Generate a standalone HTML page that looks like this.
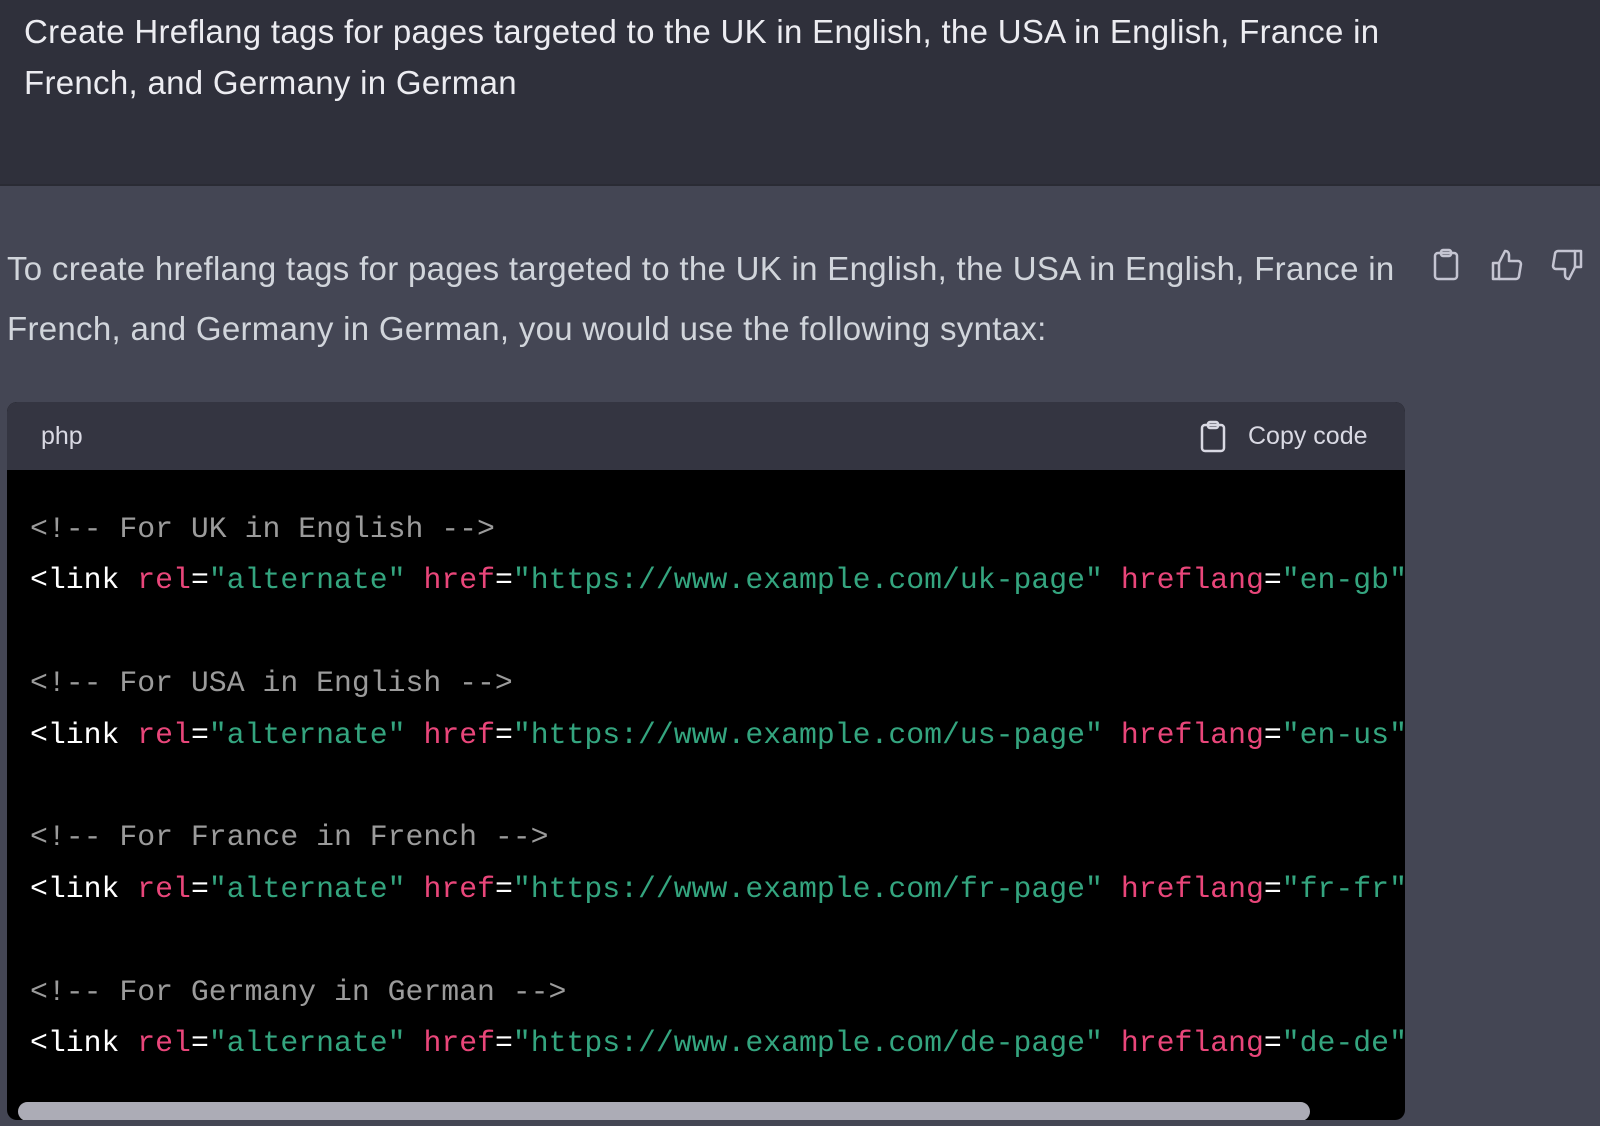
<!DOCTYPE html>
<html><head><meta charset="utf-8"><style>
*{margin:0;padding:0;box-sizing:border-box}
body{width:1600px;height:1126px;overflow:hidden;background:#444654;font-family:"Liberation Sans",sans-serif;position:relative}
.top{position:absolute;left:0;top:0;width:1600px;height:186px;background:#2f303b;border-bottom:2px solid #2a2b34}
.t{position:absolute;color:#ececf1;font-size:33px;white-space:nowrap;letter-spacing:0.3px}
.code{position:absolute;left:7px;top:402px;width:1398px;height:718px;background:#000;border-radius:10px;overflow:hidden}
.hdr{height:68px;background:#343541;position:relative}
.pre{position:absolute;left:23px;top:102px;font-family:"Liberation Mono",monospace;font-size:29.8px;line-height:51.4px;white-space:pre;color:#fff}
.c{color:#9b9b9b}.a{color:#e9467a}.s{color:#34a57f}
.sb{position:absolute;left:11px;top:700px;width:1292px;height:19px;border-radius:10px;background:#acacb6}
</style></head><body>
<div class="top"></div>
<div class="t" style="left:24px;top:13px">Create Hreflang tags for pages targeted to the UK in English, the USA in English, France in</div>
<div class="t" style="left:24px;top:64px">French, and Germany in German</div>
<div class="t" style="left:7px;top:250px;color:#d1d5db">To create hreflang tags for pages targeted to the UK in English, the USA in English, France in</div>
<div class="t" style="left:7px;top:310px;color:#d1d5db">French, and Germany in German, you would use the following syntax:</div>
<svg style="position:absolute;left:1432px;top:248px" width="30" height="34" viewBox="0 0 30 34" fill="none" stroke="#c5c5d2" stroke-width="2.5" stroke-linejoin="round"><rect x="3" y="5" width="22" height="26" rx="3"/><rect x="9" y="2" width="10" height="6" rx="2"/></svg>
<svg style="position:absolute;left:1490px;top:248px" width="36" height="34" viewBox="0 0 36 34" fill="none" stroke="#c5c5d2" stroke-width="2.5" stroke-linejoin="round"><path d="M3 15h6v16H3z"/><path d="M9 15l6-12c3 0 4 2 4 4v6h9c2 0 3 2 3 3l-2 12c0 2-2 3-3 3H9"/></svg>
<svg style="position:absolute;left:1550px;top:248px" width="36" height="34" viewBox="0 0 36 34" fill="none" stroke="#c5c5d2" stroke-width="2.5" stroke-linejoin="round"><path d="M25 3h6v16h-6z"/><path d="M25 19l-6 12c-3 0-4-2-4-4v-6H6c-2 0-3-2-3-3l2-12c0-2 2-3 3-3h17"/></svg>
<div class="code">
<div class="hdr">
<div style="position:absolute;left:34px;top:20px;color:#d9d9e3;font-size:25px">php</div>
<svg style="position:absolute;left:1192px;top:18px" width="30" height="34" viewBox="0 0 30 34" fill="none" stroke="#d9d9e3" stroke-width="2.5" stroke-linejoin="round"><rect x="3" y="5" width="22" height="26" rx="3"/><rect x="9" y="2" width="10" height="6" rx="2"/></svg>
<div style="position:absolute;left:1241px;top:20px;color:#d9d9e3;font-size:25px">Copy code</div>
</div>
<div class="pre"><span class="c">&lt;!-- For UK in English --&gt;</span>
&lt;link <span class="a">rel</span>=<span class="s">"alternate"</span> <span class="a">href</span>=<span class="s">"https://www.example.com/uk-page"</span> <span class="a">hreflang</span>=<span class="s">"en-gb"</span> /&gt;

<span class="c">&lt;!-- For USA in English --&gt;</span>
&lt;link <span class="a">rel</span>=<span class="s">"alternate"</span> <span class="a">href</span>=<span class="s">"https://www.example.com/us-page"</span> <span class="a">hreflang</span>=<span class="s">"en-us"</span> /&gt;

<span class="c">&lt;!-- For France in French --&gt;</span>
&lt;link <span class="a">rel</span>=<span class="s">"alternate"</span> <span class="a">href</span>=<span class="s">"https://www.example.com/fr-page"</span> <span class="a">hreflang</span>=<span class="s">"fr-fr"</span> /&gt;

<span class="c">&lt;!-- For Germany in German --&gt;</span>
&lt;link <span class="a">rel</span>=<span class="s">"alternate"</span> <span class="a">href</span>=<span class="s">"https://www.example.com/de-page"</span> <span class="a">hreflang</span>=<span class="s">"de-de"</span> /&gt;</div>
<div class="sb"></div>
</div>
</body></html>
